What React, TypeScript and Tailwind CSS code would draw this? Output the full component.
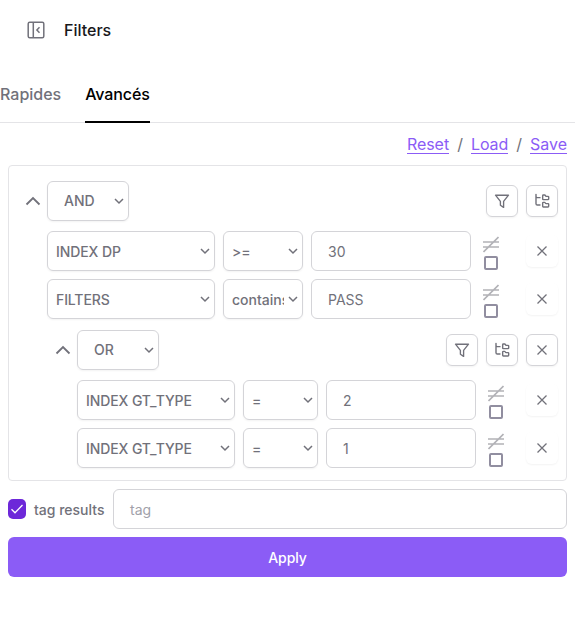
import { ReactNode } from "react";

const Chevron = () => (
  <svg className="mr-[3px] shrink-0" width="12" height="12" viewBox="0 0 12 12" fill="none" stroke="#71717a" strokeWidth="1.5">
    <path d="M2 4l4 4 4-4" />
  </svg>
);

const Collapse = () => (
  <svg className="shrink-0" width="16" height="16" viewBox="0 0 16 16" fill="none" stroke="#71717a" strokeWidth="1.8">
    <path d="M1.500 11.500L8 5l6.500 6.500" />
  </svg>
);

const FunnelIcon = () => (
  <svg width="16" height="16" viewBox="0 0 16 16" fill="none" stroke="#71717a" strokeWidth="1.35" strokeLinejoin="round">
    <path d="M1.500 2.200h13l-4.900 6.200v6l-3.200-2.200V8.400z" />
  </svg>
);

const TreeIcon = () => (
  <svg width="16" height="16" viewBox="0 0 24 24" fill="none" stroke="#71717a" strokeWidth="2.100" strokeLinecap="round" strokeLinejoin="round">
    <path d="M21 10a1 1 0 0 0 1-1V6a1 1 0 0 0-1-1h-2.500a1 1 0 0 1-.8-.4l-.9-1.200A1 1 0 0 0 16 3h-2a1 1 0 0 0-1 1v5a1 1 0 0 0 1 1Z" />
    <path d="M21 21a1 1 0 0 0 1-1v-3a1 1 0 0 0-1-1h-2.900a1 1 0 0 1-.88-.55l-.42-.85a1 1 0 0 0-.92-.6H14a1 1 0 0 0-1 1v5a1 1 0 0 0 1 1Z" />
    <path d="M3 5a2 2 0 0 0 2 2h4M3 2v14a2 2 0 0 0 2 2h4" />
  </svg>
);

const CloseIcon = () => (
  <svg width="16" height="16" viewBox="0 0 16 16" fill="none" stroke="#71717a" strokeWidth="1.300">
    <path d="M3.500 3.500l9 9M12.500 3.500l-9 9" />
  </svg>
);

const IconButton = ({ children, ghost }: { children: ReactNode; ghost?: boolean }) => (
  <button className={`flex size-8 shrink-0 items-center justify-center rounded-md border shadow-xs ${ghost ? "border-transparent" : "border-[#d4d4d8]"}`}>
    {children}
  </button>
);

const Select = ({ label, width, padding = "pl-2", text = "" }: { label: string; width: string; padding?: string; text?: string }) => (
  <div className={`flex h-10 shrink-0 items-center justify-between rounded-md border border-[#d4d4d8] shadow-xs ${width} ${padding}`}>
    <span className={`mr-[3px] overflow-hidden whitespace-nowrap ${text}`}>{label}</span>
    <Chevron />
  </div>
);

const Rule = ({ field, op, value, nested }: { field: string; op: string; value: string; nested?: boolean }) => (
  <div className="flex h-10 items-center">
    <Select label={field} width={nested ? "w-[158px]" : "w-[168px]"} text="pt-px tracking-[-0.1px]" />
    <div className={`ml-2 ${nested ? "w-[75px]" : "w-20"}`}>
      <Select label={op} width="w-full" text="pt-0.5" />
    </div>
    <div className={`ml-2 flex h-10 items-center rounded-md border border-[#d4d4d8] pl-4 pt-px font-normal ${nested ? "w-[150px]" : "w-40"}`}>{value}</div>
    <div className="ml-3 flex flex-col items-center pt-[3px]">
      <svg width="16" height="18" viewBox="0 0 16 18" fill="none" stroke="#b2b2b7" strokeWidth="1.7">
        <path d="M0 6h16M0 11h16M.5 16L15.500 1" />
      </svg>
      <span className="mt-0.5 size-3.5 rounded-[2px] border-2 border-[#918ea0]" />
    </div>
    <div className="ml-auto">
      <IconButton ghost><CloseIcon /></IconButton>
    </div>
  </div>
);

export default function App() {
  return (
    <main className="h-[623px] w-[575px] overflow-hidden bg-white font-['Inter',sans-serif] text-sm font-medium text-[#71717a]">
      <header className="flex h-[60px] items-center pl-[27px] text-base text-[#18181b]">
        <svg width="18" height="18" viewBox="0 0 18 18" fill="none" stroke="#71717a" strokeWidth="1.500">
          <rect x="1.200" y="1.200" width="15.600" height="15.600" rx="1.500" />
          <path d="M6.300 1v16M12.500 6.300L9.900 9l2.600 2.700" />
        </svg>
        <h1 className="ml-[19px]">Filters</h1>
      </header>
      <nav className="flex h-[63px] gap-6 border-b border-[#e4e4e7] text-base">
        <span className="flex h-[63px] items-center pb-[3px] pt-2">Rapides</span>
        <span className="flex h-[63px] items-center border-b-2 border-black pb-px pt-2 tracking-[-0.1px] text-black">Avancés</span>
      </nav>
      <div className="flex h-[42px] items-center justify-end gap-2 pr-2 text-base font-normal tracking-[-0.03px]">
        <a className="border-b border-[#8b5cf6] leading-[18px] text-[#8b5cf6]">Reset</a>
        <span>/</span>
        <a className="border-b border-[#8b5cf6] leading-[18px] text-[#8b5cf6]">Load</a>
        <span>/</span>
        <a className="border-b border-[#8b5cf6] leading-[18px] text-[#8b5cf6]">Save</a>
      </div>
      <section className="mx-2 h-[316px] rounded border border-[#e4e4e7] pl-4 pr-2 pt-[15px]">
        <div className="flex items-center">
          <Collapse />
          <div className="ml-1.5"><Select label="AND" width="w-[82px]" padding="pl-4" /></div>
          <div className="ml-auto flex gap-2">
            <IconButton><FunnelIcon /></IconButton>
            <IconButton><TreeIcon /></IconButton>
          </div>
        </div>
        <div className="ml-[22px] mt-2.5 flex flex-col gap-2">
          <Rule field="INDEX DP" op=">=" value="30" />
          <Rule field="FILTERS" op="contains" value="PASS" />
        </div>
        <div className="ml-[30px] mt-[11px]">
          <div className="flex items-center">
            <Collapse />
            <div className="ml-1.5"><Select label="OR" width="w-[82px]" padding="pl-4" /></div>
            <div className="ml-auto flex gap-2">
              <IconButton><FunnelIcon /></IconButton>
              <IconButton><TreeIcon /></IconButton>
              <IconButton><CloseIcon /></IconButton>
            </div>
          </div>
          <div className="ml-[22px] mt-2.5 flex flex-col gap-2">
            <Rule field="INDEX GT_TYPE" op="=" value="2" nested />
            <Rule field="INDEX GT_TYPE" op="=" value="1" nested />
          </div>
        </div>
      </section>
      <div className="mx-2 mt-2 flex h-10 items-center">
        <span className="flex h-5 w-[18px] items-center justify-center rounded-[5px] bg-[#6d28d9]">
          <svg width="14" height="14" viewBox="0 0 14 14" fill="none" stroke="white" strokeWidth="1.300"><path d="M1.500 7.300l3.500 3.500L12.500 3" /></svg>
        </span>
        <span className="ml-2 w-[79px] whitespace-nowrap pt-0.5">tag results</span>
        <div className="flex h-10 flex-1 items-center rounded-md border border-[#d4d4d8] pl-4 pt-0.5 font-normal text-[#a1a1aa]">tag</div>
      </div>
      <button className="mx-2 mt-2 h-10 w-[559px] rounded-md bg-[#8b5cf6] pt-0.5 tracking-[-0.1px] text-white">Apply</button>
    </main>
  );
}
